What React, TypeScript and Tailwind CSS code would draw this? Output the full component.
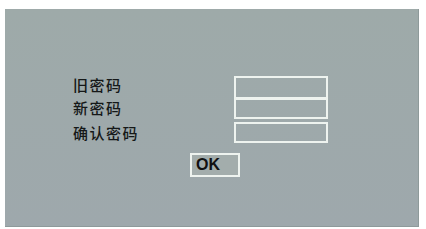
export default function App() {
  return (
    <div className="w-[426px] h-[229px] bg-white overflow-hidden">
      <div className="ml-[5px] mt-[9px] w-[414px] h-[218px] bg-gradient-to-b from-[#9eaaa9] to-[#9ea8ac] border-r border-b border-[#8e9a9a] pt-[64px] pl-[68px]">
        <div className="flex">
          <div
            className="w-[161px] text-[15px] leading-[23px] tracking-[1.5px] font-medium text-[#151818]"
            style={{ fontFamily: '"Noto Sans CJK SC", "Noto Sans", sans-serif' }}
          >
            <div>旧密码</div>
            <div>新密码</div>
            <div className="mt-[2px]">确认密码</div>
          </div>
          <div className="flex flex-col pt-[3px]">
            <div className="w-[94px] h-[23px] border-2 border-[#eef3ef]" />
            <div className="w-[94px] h-[21px] -mt-[1px] border-2 border-[#eef3ef]" />
            <div className="w-[94px] h-[21px] mt-[3px] border-2 border-[#eef3ef]" />
          </div>
        </div>
        <div className="ml-[117px] mt-[9px] w-[50px] h-[24px] border-2 border-[#eef3ef] bg-[#a3adac] pl-[4px] flex items-center">
          <span
            className="text-[16px] font-bold leading-none text-[#111]"
            style={{ fontFamily: '"Liberation Sans", Arial, sans-serif' }}
          >
            OK
          </span>
        </div>
      </div>
    </div>
  );
}
